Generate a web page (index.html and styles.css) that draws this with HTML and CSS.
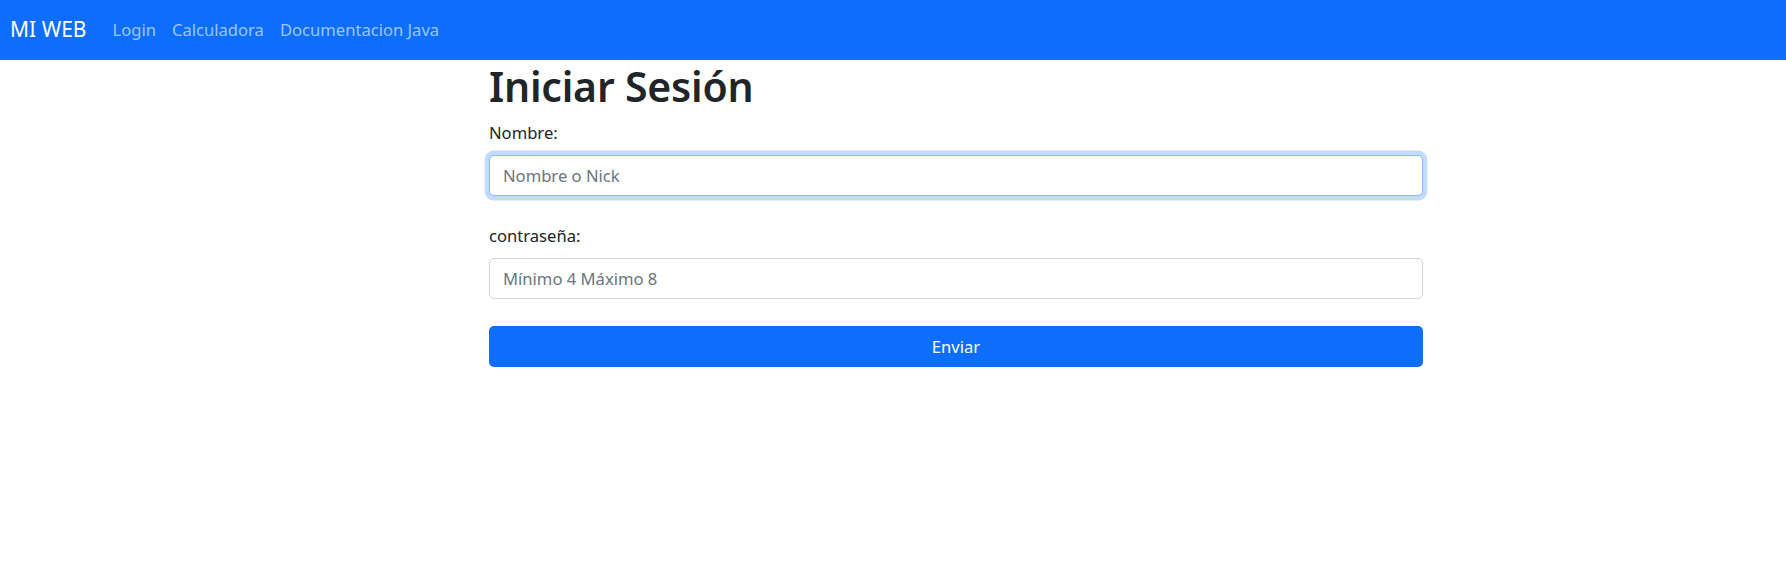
FILE: index.html
```html
<!DOCTYPE html>
<html lang="es">
<head>
<meta charset="utf-8">
<title>Iniciar Sesión</title>
<link rel="stylesheet" href="styles.css">
</head>
<body>
<nav class="navbar">
  <a class="brand" href="#">MI WEB</a>
  <ul class="nav-links">
    <li><a href="#">Login</a></li>
    <li><a href="#">Calculadora</a></li>
    <li><a href="#">Documentacion Java</a></li>
  </ul>
</nav>
<main class="content">
  <h1 class="title">Iniciar Sesión</h1>
  <form class="login-form">
    <div class="field">
      <label class="label" for="nombre">Nombre:</label>
      <input class="control control-focus" id="nombre" type="text" placeholder="Nombre o Nick" autofocus>
    </div>
    <div class="field">
      <label class="label" for="pass">contraseña:</label>
      <input class="control" id="pass" type="password" placeholder="Mínimo 4 Máximo 8">
    </div>
    <button class="btn" type="button">Enviar</button>
  </form>
</main>
</body>
</html>
```

FILE: styles.css
```css
* { box-sizing: border-box; }
html, body { margin: 0; padding: 0; }
body {
  font-family: "Noto Sans", "Open Sans", "Liberation Sans", sans-serif;
  font-size: 17.6px;
  line-height: 1.5;
  color: #212529;
  background: #fff;
}
.navbar {
  height: 60px;
  background: #0d6efd;
  display: flex;
  align-items: center;
  padding: 0 10px;
}
.brand {
  color: #fff;
  text-decoration: none;
  font-size: 21px;
  margin-right: 18px;
  line-height: 1;
  padding-bottom: 2px;
}
.nav-links {
  list-style: none;
  display: flex;
  margin: 0;
  padding: 0;
}
.nav-links a {
  display: block;
  color: rgba(255,255,255,0.6);
  text-decoration: none;
  font-size: 16.6px;
  padding: 0 8px;
}
.content {
  width: 934px;
  margin-left: 489px;
}
.title {
  font-size: 41px;
  font-weight: 600;
  line-height: 52px;
  margin: 0 0 8px 0;
  letter-spacing: -0.2px;
}
.login-form {
  display: flex;
  flex-direction: column;
}
.field {
  display: flex;
  flex-direction: column;
  margin-bottom: 27px;
}
.label {
  font-size: 16.6px;
  line-height: 26px;
  margin-bottom: 9px;
}
.control {
  height: 41px;
  width: 100%;
  border: 1px solid #ced4da;
  border-radius: 5px;
  padding: 6px 13px;
  font-family: inherit;
  font-size: 16.6px;
  color: #212529;
  background: #fff;
  outline: none;
}
.control::placeholder { color: #6c757d; }
.control-focus, .control:focus {
  border-color: #86b7fe;
  box-shadow: 0 0 0 4.4px rgba(13,110,253,0.25);
}
.btn {
  height: 41px;
  width: 100%;
  border: none;
  border-radius: 5px;
  background: #0d6efd;
  color: #fff;
  font-family: inherit;
  font-size: 16.6px;
  cursor: pointer;
}
```
